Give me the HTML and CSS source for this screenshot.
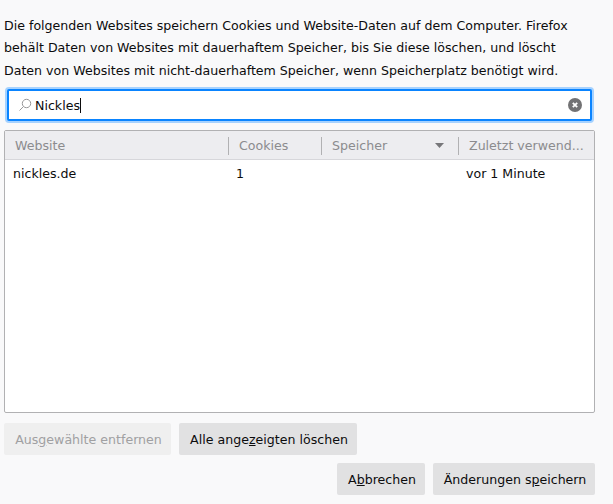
FILE: index.html
```html
<!DOCTYPE html>
<html lang="de">
<head>
    <meta charset="UTF-8">
    <title>Cookies und Website-Daten</title>
    <link rel="stylesheet" href="styles.css">
</head>
<body>
    <!-- Beschreibung -->
    <p class="description">Die folgenden Websites speichern Cookies und Website-Daten auf dem Computer. Firefox behält Daten von Websites mit dauerhaftem Speicher, bis Sie diese löschen, und löscht Daten von Websites mit nicht-dauerhaftem Speicher, wenn Speicherplatz benötigt wird.</p>

    <!-- Suche -->
    <div class="search">
        <svg class="search-icon" width="14" height="14" viewBox="0 0 14 14" fill="none" stroke="#98989a" stroke-width="1">
            <circle cx="8.5" cy="5.5" r="4.2"/>
            <path d="M5.5 8.5L1.5 12.5"/>
        </svg>
        <span class="search-text">Nickles</span>
        <span class="caret"></span>
        <svg class="clear-icon" width="14" height="14" viewBox="0 0 14 14">
            <circle cx="7" cy="7" r="7" fill="#727274"/>
            <path d="M4.8 4.8L9.2 9.2M9.2 4.8L4.8 9.2" stroke="#fff" stroke-width="1.8"/>
        </svg>
    </div>

    <!-- Tabelle -->
    <div class="table">
        <div class="table-head">
            <div class="col col-site">Website</div>
            <div class="col col-cookies">Cookies</div>
            <div class="col col-storage">
                Speicher
                <svg class="sort-icon" width="9" height="5" viewBox="0 0 9 5"><path d="M0 0H9L4.5 5Z" fill="#77777a"/></svg>
            </div>
            <div class="col col-used">Zuletzt verwend...</div>
        </div>
        <div class="table-row">
            <div class="cell cell-site">nickles.de</div>
            <div class="cell cell-cookies">1</div>
            <div class="cell cell-storage"></div>
            <div class="cell cell-used">vor 1 Minute</div>
        </div>
    </div>

    <!-- Buttons -->
    <div class="actions">
        <button class="btn btn-remove" disabled>Aus<u>g</u>ewählte entfernen</button>
        <button class="btn btn-clear">Alle ange<u>z</u>eigten löschen</button>
    </div>
    <div class="footer">
        <button class="btn btn-cancel">A<u>b</u>brechen</button>
        <button class="btn btn-save">Änderungen s<u>p</u>eichern</button>
    </div>
</body>
</html>
```

FILE: styles.css
```css
body {
    margin: 0;
    padding: 15px 18px 9px 4px;
    height: 504px;
    box-sizing: border-box;
    overflow: hidden;
    background-color: #f9f9fa;
    color: #0c0c0d;
    font-family: "DejaVu Sans", sans-serif;
    font-size: 12.6px;
}

.description {
    margin: 0;
    line-height: 22.4px;
}

/* Search box */
.search {
    display: flex;
    align-items: center;
    height: 32px;
    margin: 7px 3px 0 3px;
    padding: 0 8px 0 9px;
    box-sizing: border-box;
    background-color: #fff;
    border: 2px solid #0a84ff;
    border-radius: 2px;
    box-shadow: 0 0 0 2px #a6d2ff;
}

.search-icon {
    margin-right: 3px;
}

.caret {
    width: 1px;
    height: 15px;
    background-color: #0c0c0d;
}

.clear-icon {
    margin-left: auto;
}

/* Table */
.table {
    height: 283px;
    margin-top: 9px;
    box-sizing: border-box;
    background-color: #fff;
    border: 1px solid #b1b1b3;
    border-radius: 2px;
}

.table-head {
    display: flex;
    align-items: center;
    height: 29px;
    padding-top: 1px;
    box-sizing: border-box;
    background-color: #ededf0;
    border-bottom: 1px solid #d7d7db;
    color: #8b8b8e;
}

.table-row {
    display: flex;
    align-items: center;
    height: 26px;
}

.col {
    box-sizing: border-box;
    height: 18px;
    line-height: 18px;
    white-space: nowrap;
    border-left: 1px solid #b1b1b3;
    padding-left: 10px;
}

.col-site {
    width: 223px;
    border-left: none;
}

.col-cookies {
    width: 93px;
}

.col-storage {
    display: flex;
    align-items: center;
    width: 137px;
}

.col-used {
    flex: 1;
}

.sort-icon {
    margin-left: auto;
    margin-right: 14px;
}

.cell {
    box-sizing: border-box;
    padding-left: 8px;
}

.cell-site {
    width: 223px;
}

.cell-cookies {
    width: 93px;
}

.cell-storage {
    width: 137px;
}

/* Buttons */
.actions {
    display: flex;
    gap: 8px;
    margin-top: 10px;
}

.footer {
    display: flex;
    justify-content: flex-end;
    gap: 8px;
    margin-top: 8px;
}

.btn {
    height: 32px;
    padding: 0 8px 0 10px;
    border: none;
    border-radius: 2px;
    background-color: #e1e1e2;
    color: #0c0c0d;
    font-family: "DejaVu Sans", sans-serif;
    font-size: 12.6px;
    white-space: nowrap;
}

.btn:disabled {
    background-color: #efefef;
    color: #a0a0a2;
}

.btn-remove {
    width: 167px;
}

.btn-clear {
    width: 178px;
}

.btn-cancel {
    width: 88px;
}

.btn-save {
    width: 162px;
}
```
